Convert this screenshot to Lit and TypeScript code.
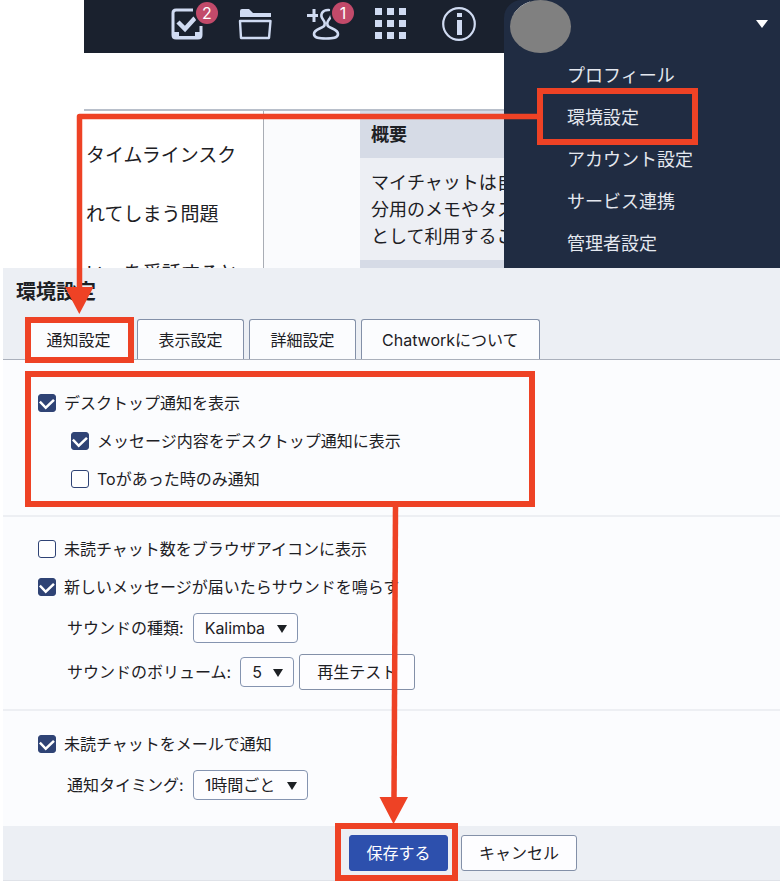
import { LitElement, html, css, svg } from "lit";
import { customElement } from "lit/decorators.js";

const toolIcons = [
  {
    label: "タスク",
    badge: "2",
    art: svg`<path d="M23 3H6Q3 3 3 6V28Q3 31 6 31H28Q31 31 31 28V19" fill="none" stroke="currentColor" stroke-width="3"/>
      <path d="M3 25H9V29H25V25H31V31H3Z" fill="currentColor"/>
      <path d="M8 15L15 22L25 11" fill="none" stroke="currentColor" stroke-width="4.500"/>`,
  },
  {
    label: "ファイル",
    badge: "",
    art: svg`<path d="M2 10V4Q2 2 4 2H11L15 6H33V10Z" fill="currentColor"/>
      <path d="M2 14H32.500L31 31H3Z" fill="none" stroke="currentColor" stroke-width="2.400" stroke-linejoin="round"/>`,
  },
  {
    label: "コンタクト",
    badge: "1",
    art: svg`<path d="M1 8.500H12M8 2V15" fill="none" stroke="currentColor" stroke-width="3"/>
      <path d="M23 3C16 2.500 13.500 8 17 12.500C19 15 20 17 17.500 19.500C14 22 8 22.500 8 27C8 31 13 31.500 20 31.500C27 31.500 32 31 32 27C32 22.500 26 22 22.500 19.500C20 17 21 15 23 12.500Q24.500 11 25 9" fill="none" stroke="currentColor" stroke-width="2.600" stroke-linecap="round"/>`,
  },
  {
    label: "アプリ",
    badge: "",
    art: svg`${[1, 13, 25].map((y) => [1, 13, 25].map((x) => svg`<rect x=${x} y=${y} width="7" height="7" fill="currentColor"/>`))}`,
  },
  {
    label: "ヘルプ",
    badge: "",
    art: svg`<circle cx="17" cy="17" r="15.800" fill="none" stroke="currentColor" stroke-width="2.200"/>
      <rect x="15" y="6" width="5" height="4" fill="currentColor"/><rect x="15" y="13" width="5" height="15" fill="currentColor"/>`,
  },
];

const menuItems = ["プロフィール", "環境設定", "アカウント設定", "サービス連携", "管理者設定"];
const chats = ["タイムラインスク", "れてしまう問題", "いーを受話すると"];
const tabs = ["通知設定", "表示設定", "詳細設定", "Chatworkについて"];

@customElement("app-root")
export class AppRoot extends LitElement {
  static styles = css`
    :host {
      display: block;
      position: relative;
      min-height: 100vh;
      background: #fff;
      color: #1d2024;
      font: 16px/24px Inter, "Noto Sans CJK JP", sans-serif;
      overflow: hidden;
    }
    * { box-sizing: border-box; }
    button, select, input { font: inherit; color: inherit; margin: 0; }
    ul, h1, h2, p { margin: 0; padding: 0; list-style: none; }
    a { color: inherit; text-decoration: none; }

    .app {
      display: grid;
      grid-template-columns: minmax(0, 1fr) 276px;
      height: 268px;
      margin-left: 84px;
      overflow: hidden;
    }
    .main { overflow: hidden; }
    .toolbar {
      display: flex;
      gap: 34px;
      height: 53px;
      padding: 7px 0 0 86px;
      background: #1a212e;
      color: #d0dbf2;
    }
    .tool {
      position: relative;
      flex: none;
      width: 34px;
      height: 34px;
      padding: 0;
      border: 0;
      background: none;
      color: inherit;
    }
    .tool svg { display: block; }
    .badge {
      position: absolute;
      left: 26px;
      top: -5px;
      width: 22px;
      height: 22px;
      border-radius: 50%;
      background: #c24a6a;
      color: #fff;
      line-height: 22px;
      text-align: center;
      box-shadow: 0 0 0 2px #1a212e;
    }
    .columns {
      display: grid;
      grid-template-columns: 180px minmax(96px, 1fr) 144px;
      height: 159px;
      margin-top: 56px;
      border-top: 2px solid #b8bfca;
    }
    .chats {
      padding: 15px 0 0 2px;
      border-right: 1px solid #a9adb5;
      font-size: 19px;
      line-height: 59px;
      white-space: nowrap;
    }
    .timeline { background: #fafbfd; }
    .overview {
      background: #d6dbe6;
      font-size: 18px;
      line-height: 27px;
      white-space: nowrap;
      overflow: hidden;
    }
    .overview h2 { font-size: 18px; line-height: 47px; padding-left: 11px; }
    .overview p { padding: 11px 0 10px 11px; background: #edeff4; }

    .account { background: #1a212e; }
    .menu {
      height: 268px;
      border-radius: 18px 0 0 0;
      background: #202c42;
      color: #e4e8ef;
      font-size: 18px;
      line-height: 42px;
    }
    .profile {
      display: flex;
      justify-content: space-between;
      width: 100%;
      height: 55px;
      padding: 0 12px 0 6px;
      border: 0;
      background: none;
    }
    .caret { margin-top: 20px; }
    .menu ul { padding-left: 63px; }
    .menu a { display: block; }

    .settings { margin-left: 3px; background: #fbfcfe; }
    .head {
      padding: 9px 0 0 13px;
      border-bottom: 1px solid #aab0bb;
      background: #eceff4;
    }
    .head h1 { font-size: 20px; line-height: 30px; }
    .tabs { display: flex; gap: 5px; padding: 12px 0 0 9px; }
    .tab {
      height: 40px;
      padding: 0 20px;
      min-width: 107px;
      border: 1px solid #8390a8;
      border-bottom: 0;
      border-radius: 3px 3px 0 0;
      background: #fbfcfe;
    }
    .group { padding: 24px 0 17px 35px; border-bottom: 2px solid #edeff3; }
    .group.sound { padding: 13px 0 15px 35px; }
    .group.mail { padding: 14px 0 19px 35px; border: 0; }
    .check { display: flex; align-items: center; gap: 8px; height: 38px; }
    .check.sub { padding-left: 33px; }
    .check input {
      appearance: none;
      flex: none;
      width: 18px;
      height: 18px;
      border: 1px solid #2f4375;
      border-radius: 3px;
      background: #fff;
    }
    .check input:checked { background: #2f4375; }
    .check input:checked::before {
      content: "";
      display: block;
      height: 16px;
      background: #fff;
      clip-path: polygon(0 47%, 11% 36%, 42% 68%, 88% 25%, 99% 36%, 42% 90%);
    }
    .field { display: flex; align-items: center; gap: 5px; height: 44px; padding-left: 29px; }
    .field label { padding-right: 4px; }
    .pick { position: relative; display: flex; }
    .pick select {
      appearance: none;
      height: 30px;
      padding: 0 31px 0 11px;
      border: 1px solid #8594b0;
      border-radius: 4px;
      background: #fdfdff;
    }
    .pick svg { position: absolute; right: 11px; top: 12px; pointer-events: none; }
    .button {
      height: 36px;
      width: 116px;
      padding: 0;
      border: 1px solid #8390a8;
      border-radius: 3px;
      background: #fdfdff;
    }
    .save { width: 99px; border-color: #2d4fab; background: #2d50ad; color: #fff; }
    .foot {
      display: flex;
      gap: 13px;
      padding: 9px 0 9px 346px;
      background: #eceff4;
      border-bottom: 1px solid #dfe2e8;
    }
    .guide { position: absolute; left: 0; top: 0; pointer-events: none; }
  `;

  private pick(id: string, value: string) {
    return html`<span class="pick">
      <select id=${id}><option>${value}</option></select>
      <svg width="10" height="8" aria-hidden="true"><path d="M0 0H10L5 8Z" fill="#1d2024" /></svg>
    </span>`;
  }

  private check(label: string, on: boolean, sub = false) {
    return html`<label class="check ${sub ? "sub" : ""}"><input type="checkbox" .checked=${on} />${label}</label>`;
  }

  render() {
    return html`
      <div class="app">
        <div class="main">
          <nav class="toolbar">
            ${toolIcons.map(
              (t) => html`<button class="tool" aria-label=${t.label}>
                <svg width="34" height="34" viewBox="0 0 34 34">${t.art}</svg>
                ${t.badge ? html`<span class="badge">${t.badge}</span>` : ""}
              </button>`
            )}
          </nav>
          <div class="columns">
            <ul class="chats">${chats.map((c) => html`<li>${c}</li>`)}</ul>
            <div class="timeline"></div>
            <section class="overview">
              <h2>概要</h2>
              <p>マイチャットは自<br />分用のメモやタス<br />として利用するこ</p>
            </section>
          </div>
        </div>
        <div class="account">
          <nav class="menu">
            <button class="profile" aria-label="アカウント">
              <svg width="62" height="53" viewBox="0 0 62 53">
                <path d="M4 14Q10 5 20 2" fill="none" stroke="#dfe4ec" stroke-width="1" />
                <ellipse cx="30.500" cy="26.500" rx="30.500" ry="26.500" fill="#808080" />
              </svg>
              <svg class="caret" width="12" height="8"><path d="M0 0H12L6 8Z" fill="#fff" /></svg>
            </button>
            <ul>${menuItems.map((m) => html`<li><a href="#">${m}</a></li>`)}</ul>
          </nav>
        </div>
      </div>

      <form class="settings">
        <header class="head">
          <h1>環境設定</h1>
          <div class="tabs">${tabs.map((t) => html`<button type="button" class="tab">${t}</button>`)}</div>
        </header>
        <div class="group">
          ${this.check("デスクトップ通知を表示", true)}
          ${this.check("メッセージ内容をデスクトップ通知に表示", true, true)}
          ${this.check("Toがあった時のみ通知", false, true)}
        </div>
        <div class="group sound">
          ${this.check("未読チャット数をブラウザアイコンに表示", false)}
          ${this.check("新しいメッセージが届いたらサウンドを鳴らす", true)}
          <div class="field"><label for="kind">サウンドの種類:</label>${this.pick("kind", "Kalimba")}</div>
          <div class="field">
            <label for="volume">サウンドのボリューム:</label>${this.pick("volume", "5")}
            <button type="button" class="button">再生テスト</button>
          </div>
        </div>
        <div class="group mail">
          ${this.check("未読チャットをメールで通知", true)}
          <div class="field"><label for="timing">通知タイミング:</label>${this.pick("timing", "1時間ごと")}</div>
        </div>
        <footer class="foot">
          <button type="button" class="button save">保存する</button>
          <button type="button" class="button">キャンセル</button>
        </footer>
      </form>

      <svg class="guide" width="780" height="882" aria-hidden="true">
        <g fill="none" stroke="#ee4225" stroke-width="6">
          <rect x="540" y="91" width="155" height="51" />
          <rect x="28" y="320" width="103" height="40" />
          <rect x="28" y="374" width="504" height="130" />
          <rect x="338" y="826" width="117" height="52" />
          <path d="M540 116.500H79.500V290" stroke-width="5.500" stroke-linejoin="round" />
          <path d="M395.500 506L394 800" stroke-width="5.500" />
        </g>
        <path d="M65 287H93.500L79.300 314Z M379.500 797H408L393.500 824Z" fill="#ee4225" />
      </svg>
    `;
  }
}
